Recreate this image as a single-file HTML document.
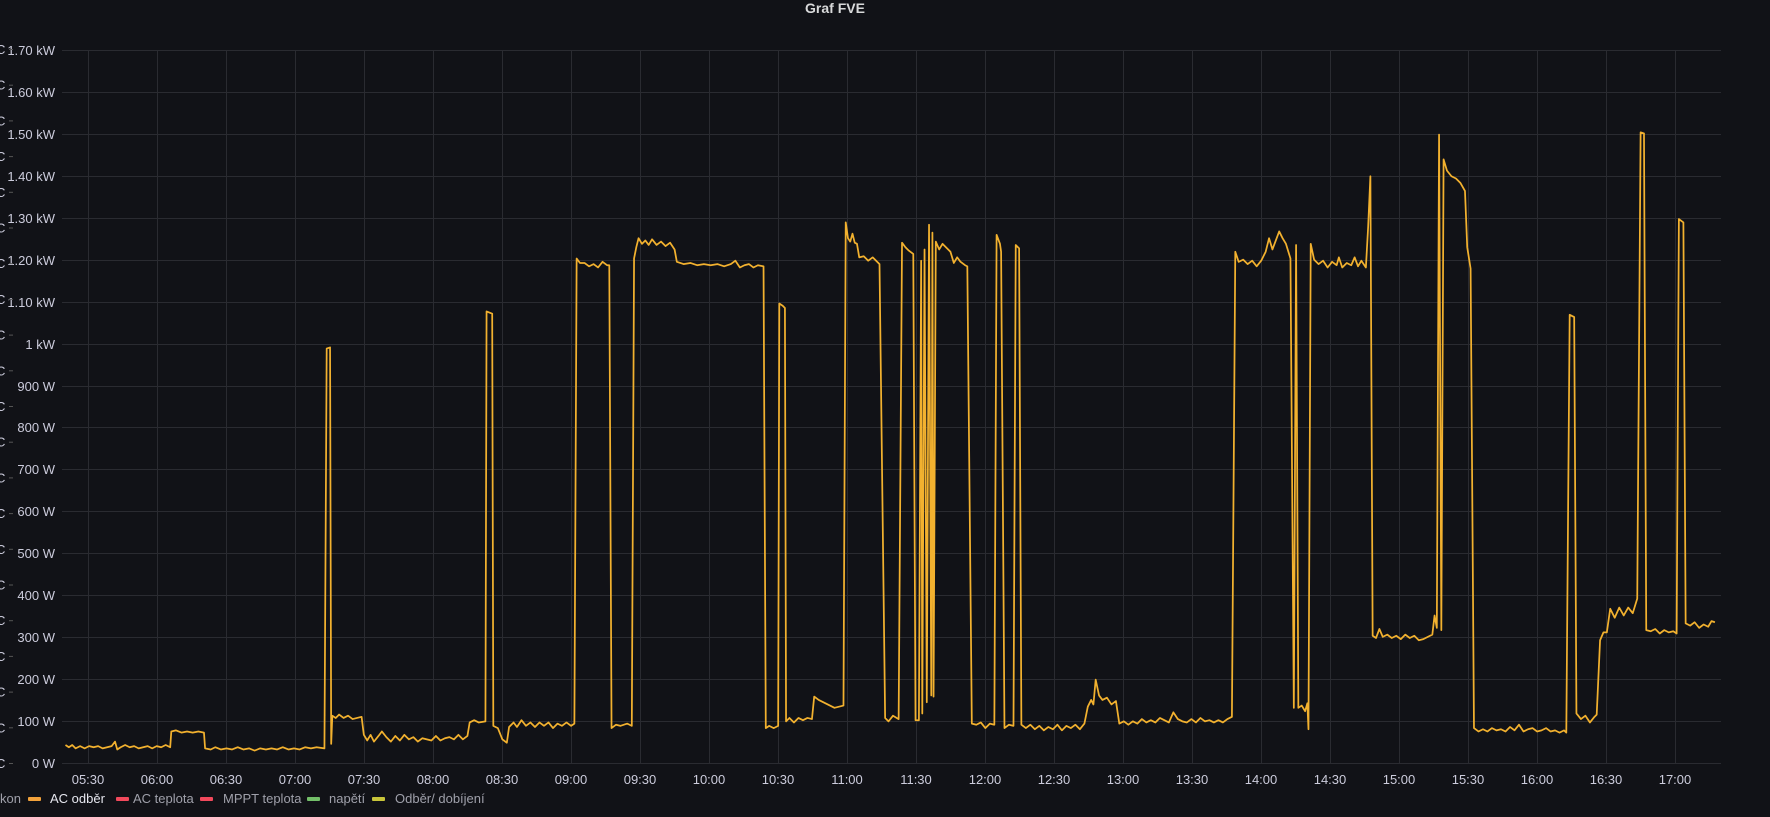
<!DOCTYPE html>
<html><head><meta charset="utf-8"><style>
html,body{margin:0;padding:0;background:#111217;width:1770px;height:817px;overflow:hidden;font-family:"Liberation Sans",sans-serif;}
</style></head><body>
<svg width="1770" height="817" xmlns="http://www.w3.org/2000/svg" style="position:absolute;left:0;top:0">
<rect width="1770" height="817" fill="#111217"/>
<text x="835" y="13" fill="#d8d9da" font-size="14" font-weight="bold" text-anchor="middle" font-family="Liberation Sans">Graf FVE</text>
<g stroke="#2a2b31" stroke-width="1">
<line x1="62" x2="1721" y1="50.5" y2="50.5"/><line x1="62" x2="1721" y1="92.5" y2="92.5"/><line x1="62" x2="1721" y1="134.5" y2="134.5"/><line x1="62" x2="1721" y1="176.5" y2="176.5"/><line x1="62" x2="1721" y1="218.5" y2="218.5"/><line x1="62" x2="1721" y1="260.5" y2="260.5"/><line x1="62" x2="1721" y1="302.5" y2="302.5"/><line x1="62" x2="1721" y1="344.5" y2="344.5"/><line x1="62" x2="1721" y1="386.5" y2="386.5"/><line x1="62" x2="1721" y1="427.5" y2="427.5"/><line x1="62" x2="1721" y1="469.5" y2="469.5"/><line x1="62" x2="1721" y1="511.5" y2="511.5"/><line x1="62" x2="1721" y1="553.5" y2="553.5"/><line x1="62" x2="1721" y1="595.5" y2="595.5"/><line x1="62" x2="1721" y1="637.5" y2="637.5"/><line x1="62" x2="1721" y1="679.5" y2="679.5"/><line x1="62" x2="1721" y1="721.5" y2="721.5"/><line x1="62" x2="1721" y1="763.5" y2="763.5"/>
</g>
<g stroke="#2a2b31" stroke-width="1" id="v"></g>
<g fill="#ccccdc" font-size="13" text-anchor="end" font-family="Liberation Sans">
<text x="55" y="55">1.70 kW</text><text x="55" y="97">1.60 kW</text><text x="55" y="139">1.50 kW</text><text x="55" y="181">1.40 kW</text><text x="55" y="223">1.30 kW</text><text x="55" y="265">1.20 kW</text><text x="55" y="307">1.10 kW</text><text x="55" y="349">1 kW</text><text x="55" y="391">900 W</text><text x="55" y="432">800 W</text><text x="55" y="474">700 W</text><text x="55" y="516">600 W</text><text x="55" y="558">500 W</text><text x="55" y="600">400 W</text><text x="55" y="642">300 W</text><text x="55" y="684">200 W</text><text x="55" y="726">100 W</text><text x="55" y="768">0 W</text>
</g>
<g id="c" fill="#ccccdc" font-size="13" font-family="Liberation Sans"></g>
<g id="t" fill="#ccccdc" font-size="13" text-anchor="middle" font-family="Liberation Sans"></g>
<g transform="matrix(1.1259 0 0 1.1262 1.3 1.7)" fill="none" stroke="#f2b12f" stroke-width="1.55" stroke-linejoin="round">
<path d="M57 660 L60 662 63 660 66 663 70 661 74 663 78 661 82 662 86 661 90 663 94 662 98 661 101 657 103 664 106 662 110 660 114 662 118 661 122 663 126 662 130 661 134 663 138 661 142 662 146 660 150 662 151 648 155 647 160 649 165 648 170 649 175 648 180 649 181 663 186 664 190 662 195 664 200 663 205 664 210 662 215 664 220 663 225 665 230 663 235 664 240 663 245 664 250 662 255 664 260 663 265 664 270 662 275 663 280 662 287 663 289 308 292 307 293 659 294 634 297 636 300 633 304 636 308 634 312 637 316 636 320 635 322 651 325 656 328 651 331 657 335 652 338 648 342 653 346 657 350 652 354 656 358 651 362 655 366 653 370 657 374 654 378 655 382 656 386 652 390 656 394 654 398 653 402 655 406 651 410 655 414 652 416 640 420 638 424 640 430 639 431 275 436 277 437 643 441 645 445 655 449 658 451 644 455 640 458 644 462 638 466 643 470 640 474 644 478 640 482 643 486 640 490 645 494 641 498 643 502 640 506 643 509 641 511 228 514 232 518 232 522 235 526 233 530 236 534 231 538 234 540 234 542 645 546 642 550 643 556 641 560 643 562 228 564 218 566 210 569 215 572 212 575 216 578 211 582 216 586 213 590 217 594 214 598 220 600 231 606 233 612 232 618 234 624 233 630 234 636 233 642 235 648 233 652 230 656 236 660 234 664 233 668 236 672 234 677 235 679 645 682 643 686 645 690 643 691 268 694 270 696 272 697 639 700 636 704 640 708 636 712 638 716 636 720 637 722 617 726 620 730 622 734 624 740 627 748 625 750 196 752 210 754 213 756 206 758 214 760 215 762 227 766 226 770 230 774 227 778 231 780 233 785 636 788 639 792 634 797 637 800 214 803 218 806 221 810 224 812 638 815 638 817 230 818 632 820 220 822 622 824 198 826 616 827 205 828 617 830 213 833 220 836 215 839 218 843 222 846 232 849 227 852 231 856 234 858 235 862 641 866 642 870 640 874 645 878 641 882 642 884 207 887 215 888 222 891 645 895 642 899 643 901 216 904 219 906 642 910 645 914 642 918 646 922 643 926 647 930 644 934 646 938 642 942 647 946 643 950 645 954 642 958 646 962 641 965 626 968 620 970 624 972 602 975 616 978 620 982 618 986 624 990 621 993 641 997 639 1001 642 1005 639 1009 641 1013 637 1017 640 1021 638 1025 640 1029 636 1033 638 1037 640 1041 631 1045 637 1049 639 1053 640 1057 637 1061 640 1065 636 1069 639 1073 638 1077 640 1081 638 1085 640 1089 637 1093 635 1096 222 1099 231 1103 229 1107 233 1111 230 1115 235 1119 230 1123 222 1126 210 1129 220 1132 212 1135 204 1138 210 1141 215 1145 228 1148 627 1150 216 1152 627 1155 625 1158 630 1160 623 1161 646 1163 215 1166 229 1170 233 1174 230 1178 236 1182 231 1186 234 1188 227 1191 236 1195 232 1199 234 1202 227 1205 235 1208 230 1212 236 1214 200 1216 155 1218 563 1221 565 1224 557 1227 564 1231 562 1235 565 1239 563 1243 566 1247 562 1251 565 1255 563 1259 567 1263 566 1267 564 1271 562 1273 545 1275 556 1277 118 1279 558 1281 140 1284 150 1288 155 1292 157 1296 161 1300 168 1302 218 1305 237 1308 645 1312 648 1316 646 1320 648 1324 645 1328 647 1332 646 1336 648 1340 644 1344 647 1348 642 1352 648 1356 646 1360 645 1364 648 1368 647 1372 645 1376 648 1380 647 1384 649 1388 647 1390 649 1393 278 1397 280 1399 632 1403 637 1407 634 1411 640 1415 635 1417 633 1420 567 1423 560 1426 560 1429 539 1433 547 1437 538 1441 545 1445 538 1449 543 1453 530 1456 116 1459 117 1461 558 1465 559 1469 557 1473 561 1477 558 1481 560 1485 559 1488 561 1490 193 1494 196 1496 552 1500 554 1504 551 1508 556 1512 553 1516 555 1519 550 1522 551"/>
</g>
<g font-size="13" font-family="Liberation Sans">
<text x="0" y="803" fill="#9fa0aa">kon</text>
<rect x="28" y="797" width="13" height="4" rx="1" fill="#f2a23b"/><text x="50" y="803" fill="#e6e7ef">AC odběr</text>
<rect x="116" y="797" width="13" height="4" rx="1" fill="#f2495c"/><text x="133" y="803" fill="#9fa0aa">AC teplota</text>
<rect x="200" y="797" width="13" height="4" rx="1" fill="#f2495c"/><text x="223" y="803" fill="#9fa0aa">MPPT teplota</text>
<rect x="307" y="797" width="13" height="4" rx="1" fill="#73bf69"/><text x="329" y="803" fill="#9fa0aa">napětí</text>
<rect x="372" y="797" width="13" height="4" rx="1" fill="#c8c53a"/><text x="395" y="803" fill="#9fa0aa">Odběr/ dobíjení</text>
</g>
</svg>
<script>
var ns="http://www.w3.org/2000/svg";
var v=document.getElementById("v"),t=document.getElementById("t"),c=document.getElementById("c");
var labels=["05:30","06:00","06:30","07:00","07:30","08:00","08:30","09:00","09:30","10:00","10:30","11:00","11:30","12:00","12:30","13:00","13:30","14:00","14:30","15:00","15:30","16:00","16:30","17:00"];
for(var i=0;i<labels.length;i++){var x=88+i*69;
var l=document.createElementNS(ns,"line");l.setAttribute("x1",x+.5);l.setAttribute("x2",x+.5);l.setAttribute("y1",50);l.setAttribute("y2",763);v.appendChild(l);
var tx=document.createElementNS(ns,"text");tx.setAttribute("x",x);tx.setAttribute("y",784);tx.textContent=labels[i];t.appendChild(tx);}
for(var j=0;j<=20;j++){var y=49+j*35.7;
var tc=document.createElementNS(ns,"text");tc.setAttribute("x",-4);tc.setAttribute("y",y+5);tc.textContent="C";c.appendChild(tc);
var r=document.createElementNS(ns,"rect");r.setAttribute("x",9);r.setAttribute("y",y);r.setAttribute("width",4);r.setAttribute("height",1);r.setAttribute("fill","#555");c.appendChild(r);}
</script>
</body></html>
